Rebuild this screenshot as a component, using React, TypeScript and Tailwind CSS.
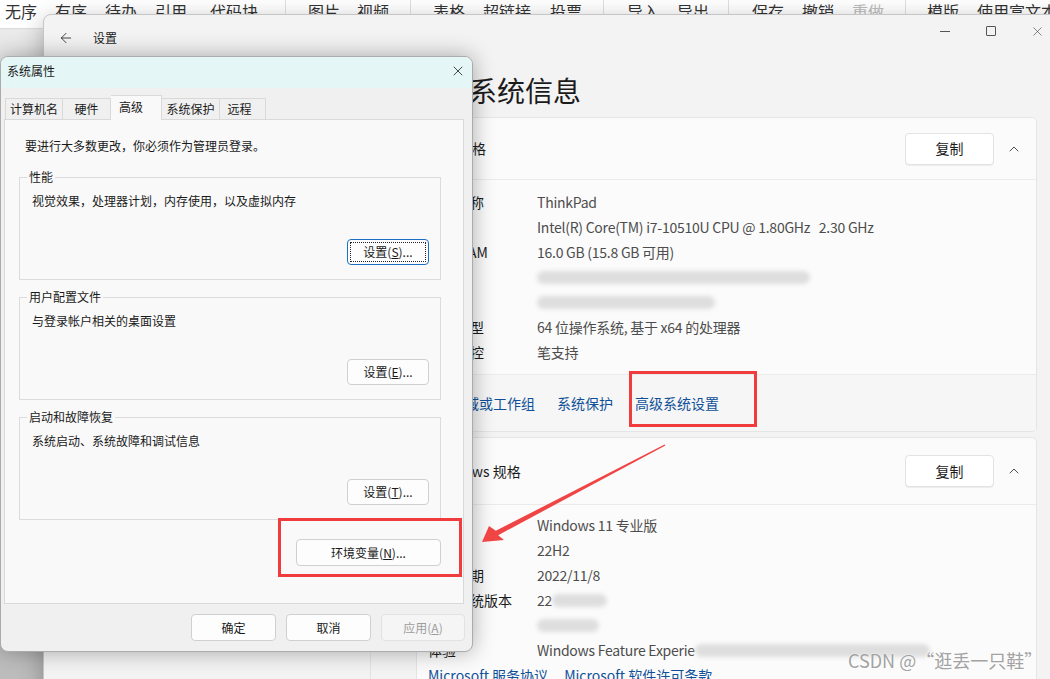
import { ArrowLeft, ChevronUp, X } from "lucide-react";

const tools = [
  { t: "无序", w: "w-[50px]" },
  { t: "有序", w: "w-[50px]" },
  { t: "待办", w: "w-[50px]" },
  { t: "引用", w: "w-[55px]" },
  { t: "代码块", w: "w-[75px]" },
  { sep: true, w: "w-[23px]" },
  { t: "图片", w: "w-[49px]" },
  { t: "视频", w: "w-[53px]" },
  { sep: true, w: "w-[23px]" },
  { t: "表格", w: "w-[50px]" },
  { t: "超链接", w: "w-[67px]" },
  { t: "投票", w: "w-[53px]" },
  { sep: true, w: "w-[24px]" },
  { t: "导入", w: "w-[50px]" },
  { t: "导出", w: "w-[51px]" },
  { sep: true, w: "w-[24px]" },
  { t: "保存", w: "w-[50px]" },
  { t: "撤销", w: "w-[50px]" },
  { t: "重做", w: "w-[53px]", dim: true },
  { sep: true, w: "w-[22px]" },
  { t: "模版", w: "w-[50px]" },
  { t: "使用富文本", w: "w-[90px]" },
];

function Blur({ w }: { w: string }) {
  return <span className={`inline-block h-[13px] rounded-full bg-[#dedede] blur-[2px] ${w}`} />;
}

function Row({ label, children }: { label: string; children: React.ReactNode }) {
  return (
    <div className="flex h-[25px] items-center">
      <div className="w-[109px] shrink-0 text-[#1b1b1b]">{label}</div>
      <div className="flex items-center whitespace-pre tracking-[-0.25px] text-[#4d4d4d]">{children}</div>
    </div>
  );
}

function CardHeader({ title, h }: { title: string; h: string }) {
  return (
    <div className={`flex items-center border-b border-[#ebebeb] pl-[13px] pr-[14px] ${h}`}>
      <span className="flex-1 text-[#1b1b1b]">{title}</span>
      <button className="h-[32px] w-[89px] rounded-[4px] border border-[#e3e3e3] bg-white text-[14px] text-[#1b1b1b] shadow-[0_1px_0_rgba(0,0,0,0.06)]">
        复制
      </button>
      <ChevronUp size={16} strokeWidth={1.3} className="ml-[12px] text-[#333]" />
    </div>
  );
}

function DlgButton({ children, w, h = "h-[26px]", focused, disabled }: { children: React.ReactNode; w: string; h?: string; focused?: boolean; disabled?: boolean }) {
  return (
    <button
      className={`relative rounded-[4px] border text-[12px] ${w} ${h} ${
        focused ? "border-[#1d6fc2] bg-[#fdfdfd]" : disabled ? "border-[#e2e2e2] bg-[#f5f5f5] text-[#9d9d9d]" : "border-[#d0d0d0] bg-[#fdfdfd] text-[#1a1a1a]"
      }`}
    >
      {focused && <span className="absolute inset-[2px] border border-dotted border-[#222]" />}
      {children}
    </button>
  );
}

function Group({ title, desc, btn, className = "" }: { title: string; desc: string; btn: React.ReactNode; className?: string }) {
  return (
    <div className={`relative flex h-[103px] flex-col justify-between border border-[#dcdcdc] pb-[14px] pl-[12px] pr-[11px] pt-[15px] ${className}`}>
      <span className="absolute -top-[9px] left-[7px] bg-[#f9f9f9] px-[2px] leading-[16px]">{title}</span>
      <div className="leading-[16px]">{desc}</div>
      <div className="flex justify-end">{btn}</div>
    </div>
  );
}

export default function App() {
  return (
    <div className="relative h-[679px] w-[1050px] overflow-hidden bg-linear-to-b from-[#ececec] to-[#bcbcbc] font-['Noto_Sans_CJK_SC',sans-serif]">
      {/* editor toolbar behind */}
      <div className="flex h-[29px] items-start border-b border-[#dcdcdc] bg-white pl-[5px] text-[16px] leading-[22px] text-[#333]">
        {tools.map((it, i) =>
          it.sep ? (
            <div key={i} className={`h-[20px] shrink-0 ${it.w}`}>
              <div className="h-full w-px bg-[#e0e0e0]" />
            </div>
          ) : (
            <div key={i} className={`shrink-0 whitespace-nowrap ${it.w} ${it.dim ? "text-[#bbb]" : ""}`}>
              {it.t}
            </div>
          )
        )}
      </div>

      {/* settings window */}
      <div className="absolute left-[43px] top-[14px] flex h-[680px] w-[1020px] flex-col overflow-hidden rounded-lg border border-[#c6c6c6] bg-[#f3f3f3] text-[14px] shadow-[0_6px_24px_rgba(0,0,0,0.28)]">
        <div className="flex h-[46px] shrink-0">
          <div className="flex flex-1 items-center gap-[19px] pl-[14px] text-[12px] text-[#1b1b1b]">
            <ArrowLeft size={16} strokeWidth={1.2} />
            <span>设置</span>
          </div>
          <div className="flex h-[32px] pr-[2px] text-[#444]">
            <div className="flex w-[46px] items-center justify-center">
              <div className="h-px w-[10px] bg-[#555]" />
            </div>
            <div className="flex w-[46px] items-center justify-center">
              <div className="h-[10px] w-[10px] rounded-[1px] border border-[#555]" />
            </div>
            <div className="flex w-[46px] items-center justify-center">
              <X size={15} strokeWidth={1} />
            </div>
          </div>
        </div>
        <div className="flex min-h-0 flex-1">
          <div className="w-[327px] shrink-0 border-r border-[#e4e4e4]" />
          <div className="flex-1 pl-[45px] pr-[25px]">
            <h1 className="mb-[7px] pl-[53px] pt-[9px] text-[28px] leading-[40px] text-[#1b1b1b]">系统信息</h1>

            <div className="overflow-hidden rounded-[5px] border border-[#e5e5e5] bg-[#fbfbfb]">
              <CardHeader title="设备规格" h="h-[62px]" />
              <div className="pb-[9px] pl-[11px] pt-[10px]">
                <Row label="设备名称">ThinkPad</Row>
                <Row label="处理器">Intel(R) Core(TM) i7-10510U CPU @ 1.80GHz   2.30 GHz</Row>
                <Row label="机带 RAM">16.0 GB (15.8 GB 可用)</Row>
                <Row label="设备 ID">
                  <Blur w="w-[273px]" />
                </Row>
                <Row label="产品 ID">
                  <Blur w="w-[178px]" />
                </Row>
                <Row label="系统类型">64 位操作系统, 基于 x64 的处理器</Row>
                <Row label="笔和触控">笔支持</Row>
              </div>
              <div className="flex h-[57px] items-center gap-[22px] border-t border-[#ebebeb] bg-[#f6f6f6] pl-[48px] text-[#0f5199]">
                <span>域或工作组</span>
                <span>系统保护</span>
                <span>高级系统设置</span>
              </div>
            </div>

            <div className="mt-[5px] overflow-hidden rounded-[5px] border border-[#e5e5e5] bg-[#fbfbfb]">
              <CardHeader title="Windows 规格" h="h-[67px]" />
              <div className="pl-[11px] pt-[8px]">
                <Row label="版本">Windows 11 专业版</Row>
                <Row label="版本号">22H2</Row>
                <Row label="安装日期">2022/11/8</Row>
                <Row label="操作系统版本">
                  22
                  <Blur w="w-[55px]" />
                </Row>
                <Row label="">
                  <Blur w="w-[62px]" />
                </Row>
                <Row label="体验">
                  Windows Feature Experie
                  <Blur w="w-[235px]" />
                </Row>
                <div className="flex h-[25px] items-center gap-[16px] text-[#0f5199]">
                  <span>Microsoft 服务协议</span>
                  <span>Microsoft 软件许可条款</span>
                </div>
              </div>
            </div>
          </div>
        </div>
      </div>

      {/* system properties dialog */}
      <div className="absolute left-0 top-[56px] flex h-[596px] w-[473px] flex-col overflow-hidden rounded-lg border border-[#ababab] bg-[#f0f0f0] text-[12px] text-[#1a1a1a] shadow-[0_0_22px_rgba(0,0,0,0.32)]">
        <div className="flex h-[31px] shrink-0 items-center justify-between bg-[#e4f7f6] pb-[4px] pl-[6px] pr-[6px]">
          <span>系统属性</span>
          <X size={16} strokeWidth={1.2} />
        </div>
        <div className="flex flex-col pl-[3px] pt-[7px]">
          <div className="relative z-10 -mb-px ml-[1px] flex h-[25px] items-end">
            {["计算机名", "硬件"].map((t, i) => (
              <div key={t} className={`mb-px flex h-[21px] items-center justify-center border border-b-0 border-[#d9d9d9] bg-[#f0f0f0] ${i === 0 ? "w-[58px]" : "w-[48px] border-l-0"}`}>
                {t}
              </div>
            ))}
            <div className="flex h-[25px] w-[51px] items-center justify-center border border-b-0 border-l-0 border-[#d9d9d9] bg-[#f9f9f9] pb-[2px] pr-[10px]">
              高级
            </div>
            <div className="mb-px flex h-[21px] w-[58px] items-center justify-center border border-b-0 border-l-0 border-[#d9d9d9] bg-[#f0f0f0]">
              系统保护
            </div>
            <div className="mb-px flex h-[21px] w-[46px] items-center justify-center border border-b-0 border-l-0 border-[#d9d9d9] bg-[#f0f0f0] pr-[6px]">
              远程
            </div>
          </div>
          <div className="h-[485px] w-[460px] border border-[#d9d9d9] bg-[#f9f9f9] pl-[14px] pr-[22px] pt-[18px]">
            <p className="ml-[6px] leading-[16px]">要进行大多数更改，你必须作为管理员登录。</p>
            <Group
              className="mt-[23px]"
              title="性能"
              desc="视觉效果，处理器计划，内存使用，以及虚拟内存"
              btn={
                <DlgButton w="w-[82px]" focused>
                  设置(<u>S</u>)...
                </DlgButton>
              }
            />
            <Group
              className="mt-[17px]"
              title="用户配置文件"
              desc="与登录帐户相关的桌面设置"
              btn={
                <DlgButton w="w-[82px]">
                  设置(<u>E</u>)...
                </DlgButton>
              }
            />
            <Group
              className="mt-[17px]"
              title="启动和故障恢复"
              desc="系统启动、系统故障和调试信息"
              btn={
                <DlgButton w="w-[82px]">
                  设置(<u>T</u>)...
                </DlgButton>
              }
            />
            <div className="mt-[19px] flex justify-end">
              <DlgButton w="w-[145px]" h="h-[27px]">
                环境变量(<u>N</u>)...
              </DlgButton>
            </div>
          </div>
          <div className="mt-[10px] flex justify-end gap-[10px] pr-[7px]">
            <DlgButton w="w-[85px]" h="h-[27px]">确定</DlgButton>
            <DlgButton w="w-[85px]" h="h-[27px]">取消</DlgButton>
            <DlgButton w="w-[84px]" h="h-[27px]" disabled>
              应用(<u>A</u>)
            </DlgButton>
          </div>
        </div>
      </div>

      {/* annotations */}
      <div className="absolute left-[629px] top-[371px] h-[56px] w-[128px] border-[3px] border-[#f03c3c]" />
      <div className="absolute left-[278px] top-[518px] h-[59px] w-[184px] border-[3px] border-[#f03c3c]" />
      <svg className="pointer-events-none absolute inset-0" width="1050" height="679">
        <polygon
          points="482,542 489,526 495.8,530.8 664.6,444.6 665.4,445.4 498.2,535.2 504,540"
          fill="#f04545"
        />
      </svg>
      <div className="absolute left-[848px] top-[648px] text-[18px] leading-[24px] text-[#a3a3a3] [text-shadow:0_0_2px_#fff]">
        CSDN @“逛丢一只鞋”
      </div>
    </div>
  );
}
